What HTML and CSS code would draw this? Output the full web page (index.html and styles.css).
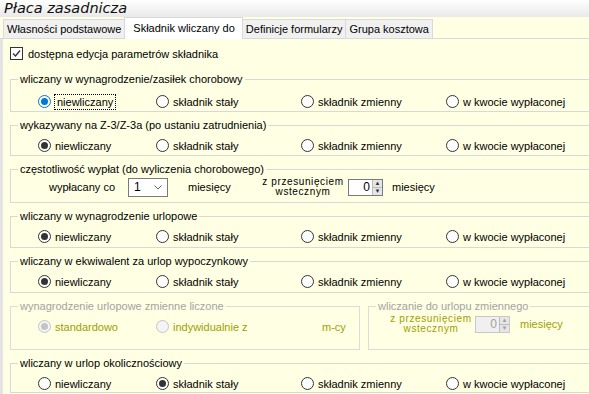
FILE: index.html
```html
<!DOCTYPE html>
<html lang="pl">
<head>
    <meta charset="UTF-8">
    <meta name="viewport" content="width=device-width, initial-scale=1.0">
    <title>Płaca zasadnicza</title>
    <link rel="stylesheet" href="styles.css">
</head>
<body>
    <header class="title">Płaca zasadnicza</header>
    <div class="tabs">
        <div class="tab">Własności podstawowe</div>
        <div class="tab active">Składnik wliczany do</div>
        <div class="tab">Definicje formularzy</div>
        <div class="tab">Grupa kosztowa</div>
    </div>
    <div class="panel">
        <label class="check">
            <span class="box"><svg width="11" height="11" viewBox="0 0 11 11"><polyline points="2,5.5 4.5,8 9,2.5" fill="none" stroke="#333" stroke-width="1.3"/></svg></span>
            dostępna edycja parametrów składnika
        </label>

        <fieldset class="group g1">
            <legend>wliczany w wynagrodzenie/zasiłek chorobowy</legend>
            <div class="options first">
                <label class="opt"><span class="radio focus"></span><span class="focused">niewliczany</span></label>
                <label class="opt"><span class="radio"></span>składnik stały</label>
                <label class="opt"><span class="radio"></span>składnik zmienny</label>
                <label class="opt"><span class="radio"></span>w kwocie wypłaconej</label>
            </div>
        </fieldset>

        <fieldset class="group g2">
            <legend>wykazywany na Z-3/Z-3a (po ustaniu zatrudnienia)</legend>
            <div class="options">
                <label class="opt"><span class="radio on"></span>niewliczany</label>
                <label class="opt"><span class="radio"></span>składnik stały</label>
                <label class="opt"><span class="radio"></span>składnik zmienny</label>
                <label class="opt"><span class="radio"></span>w kwocie wypłaconej</label>
            </div>
        </fieldset>

        <fieldset class="group g3">
            <legend>częstotliwość wypłat (do wyliczenia chorobowego)</legend>
            <div class="freq">
                <span class="every">wypłacany co</span>
                <span class="combo">1<svg width="8" height="5" viewBox="0 0 8 5"><polyline points="0.5,0.5 4,4 7.5,0.5" fill="none" stroke="#666" stroke-width="1"/></svg></span>
                <span class="unit">miesięcy</span>
                <span class="shift">z przesunięciem<br>wstecznym</span>
                <span class="spin"><span class="val">0</span><span class="btns"><i>&#9650;</i><i>&#9660;</i></span></span>
                <span class="unit2">miesięcy</span>
            </div>
        </fieldset>

        <fieldset class="group g4">
            <legend>wliczany w wynagrodzenie urlopowe</legend>
            <div class="options">
                <label class="opt"><span class="radio on"></span>niewliczany</label>
                <label class="opt"><span class="radio"></span>składnik stały</label>
                <label class="opt"><span class="radio"></span>składnik zmienny</label>
                <label class="opt"><span class="radio"></span>w kwocie wypłaconej</label>
            </div>
        </fieldset>

        <fieldset class="group g5">
            <legend>wliczany w ekwiwalent za urlop wypoczynkowy</legend>
            <div class="options">
                <label class="opt"><span class="radio on"></span>niewliczany</label>
                <label class="opt"><span class="radio"></span>składnik stały</label>
                <label class="opt"><span class="radio"></span>składnik zmienny</label>
                <label class="opt"><span class="radio"></span>w kwocie wypłaconej</label>
            </div>
        </fieldset>

        <div class="pair">
            <fieldset class="group disabled variable">
                <legend>wynagrodzenie urlopowe zmienne liczone</legend>
                <div class="options mode">
                    <label class="opt"><span class="radio on"></span>standardowo</label>
                    <label class="opt"><span class="radio"></span>indywidualnie z</label>
                    <span class="opt">m-cy</span>
                </div>
            </fieldset>
            <fieldset class="group disabled include">
                <legend>wliczanie do urlopu zmiennego</legend>
                <div class="freq">
                    <span class="shift">z przesunięciem<br>wstecznym</span>
                    <span class="spin"><span class="val">0</span><span class="btns"><i>&#9650;</i><i>&#9660;</i></span></span>
                    <span class="unit2">miesięcy</span>
                </div>
            </fieldset>
        </div>

        <fieldset class="group g8">
            <legend>wliczany w urlop okolicznościowy</legend>
            <div class="options">
                <label class="opt"><span class="radio"></span>niewliczany</label>
                <label class="opt"><span class="radio on"></span>składnik stały</label>
                <label class="opt"><span class="radio"></span>składnik zmienny</label>
                <label class="opt"><span class="radio"></span>w kwocie wypłaconej</label>
            </div>
        </fieldset>
    </div>
</body>
</html>
```

FILE: styles.css
```css
body {
    margin: 0;
    padding: 0;
    width: 589px;
    height: 394px;
    overflow: hidden;
    font-family: "Liberation Sans", Arial, sans-serif;
    font-size: 11px;
    color: #000;
    background-color: #ffffe3;
}
.title {
    height: 17px;
    padding-left: 4px;
    font-family: "DejaVu Sans", sans-serif;
    font-style: italic;
    font-size: 14.5px;
    line-height: 17px;
    color: #111;
    background: linear-gradient(#ffffff, #e9e9e9);
}
.tabs {
    display: flex;
    align-items: flex-end;
    height: 21px;
    padding-left: 3px;
    border-bottom: 1px solid #d9d9d9;
}
.tab {
    height: 18px;
    line-height: 18px;
    padding: 0 3px;
    margin-right: -1px;
    background-color: #f0f0f0;
    border: 1px solid #d9d9d9;
    border-bottom: none;
    white-space: nowrap;
}
.tab.active {
    position: relative;
    height: 21px;
    line-height: 21px;
    margin-bottom: -1px;
    padding: 0 7px 0 8px;
    background-color: #fff;
    z-index: 1;
}
.panel {
    height: 355px;
    padding-left: 7px;
    border-left: 3px solid #e4e4e4;
    overflow: hidden;
}
.check {
    display: flex;
    align-items: center;
    height: 13px;
    margin: 8px 0 13px 0;
    gap: 5px;
}
.box {
    display: inline-flex;
    align-items: center;
    justify-content: center;
    width: 11px;
    height: 11px;
    border: 1px solid #333;
    background-color: #fff;
}
.group {
    box-sizing: border-box;
    width: 620px;
    height: 38px;
    margin: 0 0 7px 0;
    padding: 0 0 0 7px;
    border: 1px solid #d9d9d3;
    min-width: 0;
}
.group legend {
    padding: 0 2px;
    line-height: 13px;
}
.g1 { height: 39px; }
.g2 { height: 37px; }
.g3 { height: 40px; }
.g8 { height: 36px; }
.options {
    display: grid;
    grid-template-columns: 118px 145px 145px auto;
    align-items: center;
    height: 15px;
    margin: 6px 0 0 20px;
}
.options.first {
    margin-top: 8px;
}
.opt {
    display: flex;
    align-items: center;
    gap: 4px;
    white-space: nowrap;
}
.radio {
    box-sizing: border-box;
    position: relative;
    width: 13px;
    height: 13px;
    border: 1px solid #333;
    border-radius: 50%;
    background-color: #fff;
    flex: none;
}
.radio.on::after,
.radio.focus::after {
    content: "";
    position: absolute;
    left: 2px;
    top: 2px;
    width: 7px;
    height: 7px;
    border-radius: 50%;
    background-color: #333;
}
.radio.focus {
    border-color: #0078d7;
}
.radio.focus::after {
    background-color: #0078d7;
}
.focused {
    outline: 1px dotted #000;
    outline-offset: 1px;
    margin-left: 1px;
    padding: 0 1px;
}
.freq {
    display: flex;
    align-items: center;
    height: 20px;
    margin-top: 1px;
    white-space: nowrap;
}
.every {
    margin-left: 31px;
    width: 79px;
}
.combo {
    box-sizing: border-box;
    display: flex;
    align-items: center;
    justify-content: space-between;
    width: 40px;
    height: 19px;
    padding: 0 5px 0 5px;
    border: 1px solid #7a7a7a;
    background-color: #fff;
    font-size: 12px;
}
.unit {
    margin-left: 20px;
    width: 72px;
}
.shift {
    width: 86px;
    text-align: center;
    line-height: 10px;
    font-size: 10px;
    letter-spacing: 0.6px;
}
.spin {
    box-sizing: border-box;
    display: flex;
    width: 35px;
    height: 17px;
    margin-left: 2px;
    border: 1px solid #7a7a7a;
    background-color: #fff;
}
.spin .val {
    flex: 1;
    text-align: right;
    padding-right: 2px;
    line-height: 15px;
    font-size: 12px;
}
.btns {
    display: flex;
    flex-direction: column;
    width: 10px;
}
.btns i {
    flex: 1;
    font-style: normal;
    font-size: 6px;
    line-height: 7px;
    text-align: center;
    color: #333;
    background-color: #e6e6e6;
    border-left: 1px solid #bbb;
}
.btns i + i {
    border-top: 1px solid #bbb;
}
.unit2 {
    margin-left: 9px;
}
.pair {
    display: flex;
    gap: 8px;
}
.pair .group {
    flex: none;
    height: 50px;
}
.group.variable {
    width: 350px;
}
.group.include {
    width: 260px;
}
.options.mode {
    grid-template-columns: 118px 166px auto;
    height: 19px;
    margin-top: 4px;
}
.include .freq {
    margin-top: 1px;
}
.include .shift {
    margin-left: 13px;
    width: 84px;
}
.include .unit2 {
    margin-left: 10px;
}
.disabled {
    border-color: #dcdcd6;
}
.disabled legend {
    color: #a3a3a3;
}
.disabled .opt,
.disabled .shift,
.disabled .unit2 {
    color: #a0a000;
}
.disabled .radio {
    border-color: #c4c4c4;
    background-color: #f4f4f4;
}
.disabled .radio.on::after {
    background-color: #c4c4c4;
}
.disabled .spin {
    border-color: #c8c8c8;
    background-color: #f0f0f0;
}
.disabled .spin .val,
.disabled .btns i {
    color: #a0a0a0;
}
```
